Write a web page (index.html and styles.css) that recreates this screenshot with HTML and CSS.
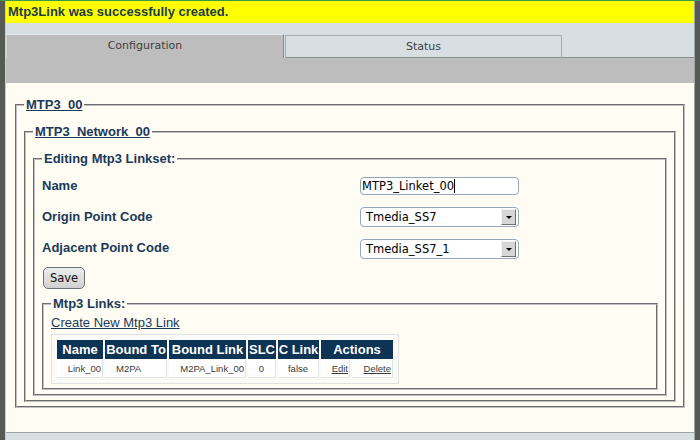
FILE: index.html
```html
<!DOCTYPE html>
<html>
<head>
<meta charset="utf-8">
<title>Mtp3 Linkset</title>
<link rel="stylesheet" href="styles.css">
</head>
<body>
<div class="page">
  <div class="banner">Mtp3Link was successfully created.</div>
  <div class="tabs">
    <div class="tab tab-active">Configuration</div>
    <div class="tab tab-idle">Status</div>
    <div class="tab-fill"></div>
  </div>
  <div class="band"></div>
  <div class="content">
    <fieldset class="fs fs-wide">
      <legend><a class="lg-link" href="#">MTP3_00</a></legend>
      <fieldset class="fs fs-wide">
        <legend><a class="lg-link" href="#">MTP3_Network_00</a></legend>
        <fieldset class="fs">
          <legend>Editing Mtp3 Linkset:</legend>
          <div class="form">
            <div class="label">Name</div>
            <div class="input">MTP3_Linket_00<span class="caret"></span></div>
            <div class="label">Origin Point Code</div>
            <div class="select"><span>Tmedia_SS7</span><span class="drop"><span class="tri"></span></span></div>
            <div class="label">Adjacent Point Code</div>
            <div class="select select-2"><span>Tmedia_SS7_1</span><span class="drop"><span class="tri"></span></span></div>
          </div>
          <button class="btn" type="button">Save</button>
          <fieldset class="fs fs-links">
            <legend>Mtp3 Links:</legend>
            <a class="create" href="#">Create New Mtp3 Link</a>
            <div class="twrap">
              <table class="tbl">
                <colgroup>
                  <col class="w-name"><col class="w-bto"><col class="w-blink"><col class="w-slc"><col class="w-clink"><col class="w-edit"><col class="w-del">
                </colgroup>
                <tr>
                  <th>Name</th><th>Bound To</th><th>Bound Link</th><th>SLC</th><th>C Link</th><th colspan="2">Actions</th>
                </tr>
                <tr>
                  <td class="r">Link_00</td>
                  <td class="l">M2PA</td>
                  <td class="r">M2PA_Link_00</td>
                  <td class="c">0</td>
                  <td class="c">false</td>
                  <td class="r"><a class="act" href="#">Edit</a></td>
                  <td class="r"><a class="act" href="#">Delete</a></td>
                </tr>
              </table>
            </div>
          </fieldset>
        </fieldset>
      </fieldset>
    </fieldset>
  </div>
  <div class="footer"></div>
</div>
</body>
</html>
```
FILE: styles.css
```css
* { box-sizing: border-box; }
html, body { margin: 0; padding: 0; }
body {
  width: 700px;
  height: 440px;
  overflow: hidden;
  background: #565a55;
  border-top: 1px solid #3e9a48;
  font-family: "Liberation Sans", Arial, sans-serif;
}
.page {
  margin-left: 5px;
  width: 690px;
  border-left: 1px solid #c9cfd2;
  border-right: 1px solid #9ea5a8;
}
.banner {
  height: 22px;
  background: #ffff00;
  color: #1d3c4c;
  font-weight: bold;
  font-size: 13px;
  line-height: 22px;
  padding-left: 2px;
}
.tabs {
  display: flex;
  align-items: flex-end;
  height: 35px;
  background: #d8dfe3;
}
.tab {
  font-family: "DejaVu Sans", Verdana, sans-serif;
  font-size: 11px;
  color: #3d3d3d;
  text-align: center;
}
.tab-active {
  width: 278px;
  height: 24px;
  line-height: 22px;
  background: #bdbdbd;
  border-top: 1px solid #e4e4e4;
  border-left: 1px solid #d6d6d6;
  border-right: 1px solid #8a8a8a;
}
.tab-idle {
  width: 277px;
  height: 23px;
  line-height: 21px;
  margin-left: 1px;
  background: #d8dfe3;
  border: 1px solid #a9adb0;
  border-bottom-color: #8c8c8c;
}
.tab-fill {
  flex: 1;
  height: 1px;
  border-bottom: 1px solid #8c8c8c;
}
.band {
  height: 25px;
  background: #bdbdbd;
}
.content {
  height: 349px;
  background: #fefcf3;
  padding: 14px 9px 0 9px;
}
.footer {
  height: 8px;
  background: #d8dfe3;
  border-top: 1px solid #9da3a5;
}
.fs {
  margin: 0;
  min-width: 0;
  border: 2px groove #c0c0c0;
  padding: 4px 7px 4px 7px;
}
.fs-wide { padding-top: 12px; }
.fs legend {
  padding: 0 2px;
  font-weight: bold;
  font-size: 13px;
  line-height: 15px;
  color: #1a3a5a;
}
.lg-link {
  color: #1a3a5a;
  text-decoration: underline;
}
.form {
  display: grid;
  grid-template-columns: 318px 159px;
  grid-auto-rows: 31px;
  align-items: center;
}
.label {
  font-weight: bold;
  font-size: 13px;
  color: #1a3a5a;
}
.input {
  height: 18px;
  border: 1px solid #93a7bb;
  border-radius: 4px;
  background: #fff;
  font-family: "DejaVu Sans", Verdana, sans-serif;
  font-size: 11.5px;
  line-height: 16px;
  color: #000;
  padding-left: 1px;
  white-space: nowrap;
}
.caret {
  display: inline-block;
  width: 1px;
  height: 14px;
  background: #000;
  vertical-align: -3px;
}
.select {
  height: 20px;
  margin-top: 1px;
  border: 1px solid #93a7bb;
  border-radius: 4px;
  background: #fff;
  display: flex;
  align-items: center;
  justify-content: space-between;
  padding: 0 2px 0 5px;
  font-family: "DejaVu Sans", Verdana, sans-serif;
  font-size: 11.5px;
  color: #000;
}
.select-2 { margin-top: 3px; }
.drop {
  width: 15px;
  height: 16px;
  background: #d6d6d6;
  border: 1px solid;
  border-color: #f4f4f4 #707070 #707070 #f4f4f4;
  display: flex;
  align-items: center;
  justify-content: center;
}
.tri {
  width: 0;
  height: 0;
  border-left: 3px solid transparent;
  border-right: 3px solid transparent;
  border-top: 3px solid #000;
}
.btn {
  display: block;
  width: 42px;
  height: 22px;
  margin: 4px 0 0 1px;
  padding: 0;
  border: 1px solid #6b7277;
  border-radius: 5px;
  background: linear-gradient(#eeeeee, #cfcfcf);
  font-family: "DejaVu Sans", Verdana, sans-serif;
  font-size: 11.5px;
  color: #111;
}
.fs-links {
  margin-top: 7px;
}
.create {
  display: block;
  font-size: 13px;
  line-height: 15px;
  color: #1a3a5a;
  text-decoration: underline;
  width: max-content;
}
.twrap {
  width: max-content;
  margin-top: 4px;
  border: 1px solid #dfe2e0;
  background: #fafaf6;
  padding: 4px 3px;
}
.tbl {
  border-collapse: separate;
  border-spacing: 2px 1px;
}
.w-name { width: 46px; }
.w-bto { width: 62px; }
.w-blink { width: 77px; }
.w-slc { width: 28px; }
.w-clink { width: 41px; }
.w-edit { width: 29px; }
.w-del { width: 41px; }
.tbl th {
  height: 19px;
  padding: 0;
  background: #0d3355;
  color: #fff;
  font-weight: bold;
  font-size: 13px;
  line-height: 15px;
  text-align: center;
  white-space: nowrap;
}
.tbl td {
  height: 18px;
  padding: 0;
  background: #fff;
  color: #3a3a3a;
  font-size: 9.5px;
  white-space: nowrap;
  border-right: 1px solid #e4e4e4;
  border-bottom: 1px solid #e4e4e4;
}
.tbl td.r { text-align: right; padding-right: 1px; }
.tbl td.l { text-align: left; padding-left: 11px; }
.tbl td.c { text-align: center; }
.act { color: #3a3a3a; text-decoration: underline; }
```
